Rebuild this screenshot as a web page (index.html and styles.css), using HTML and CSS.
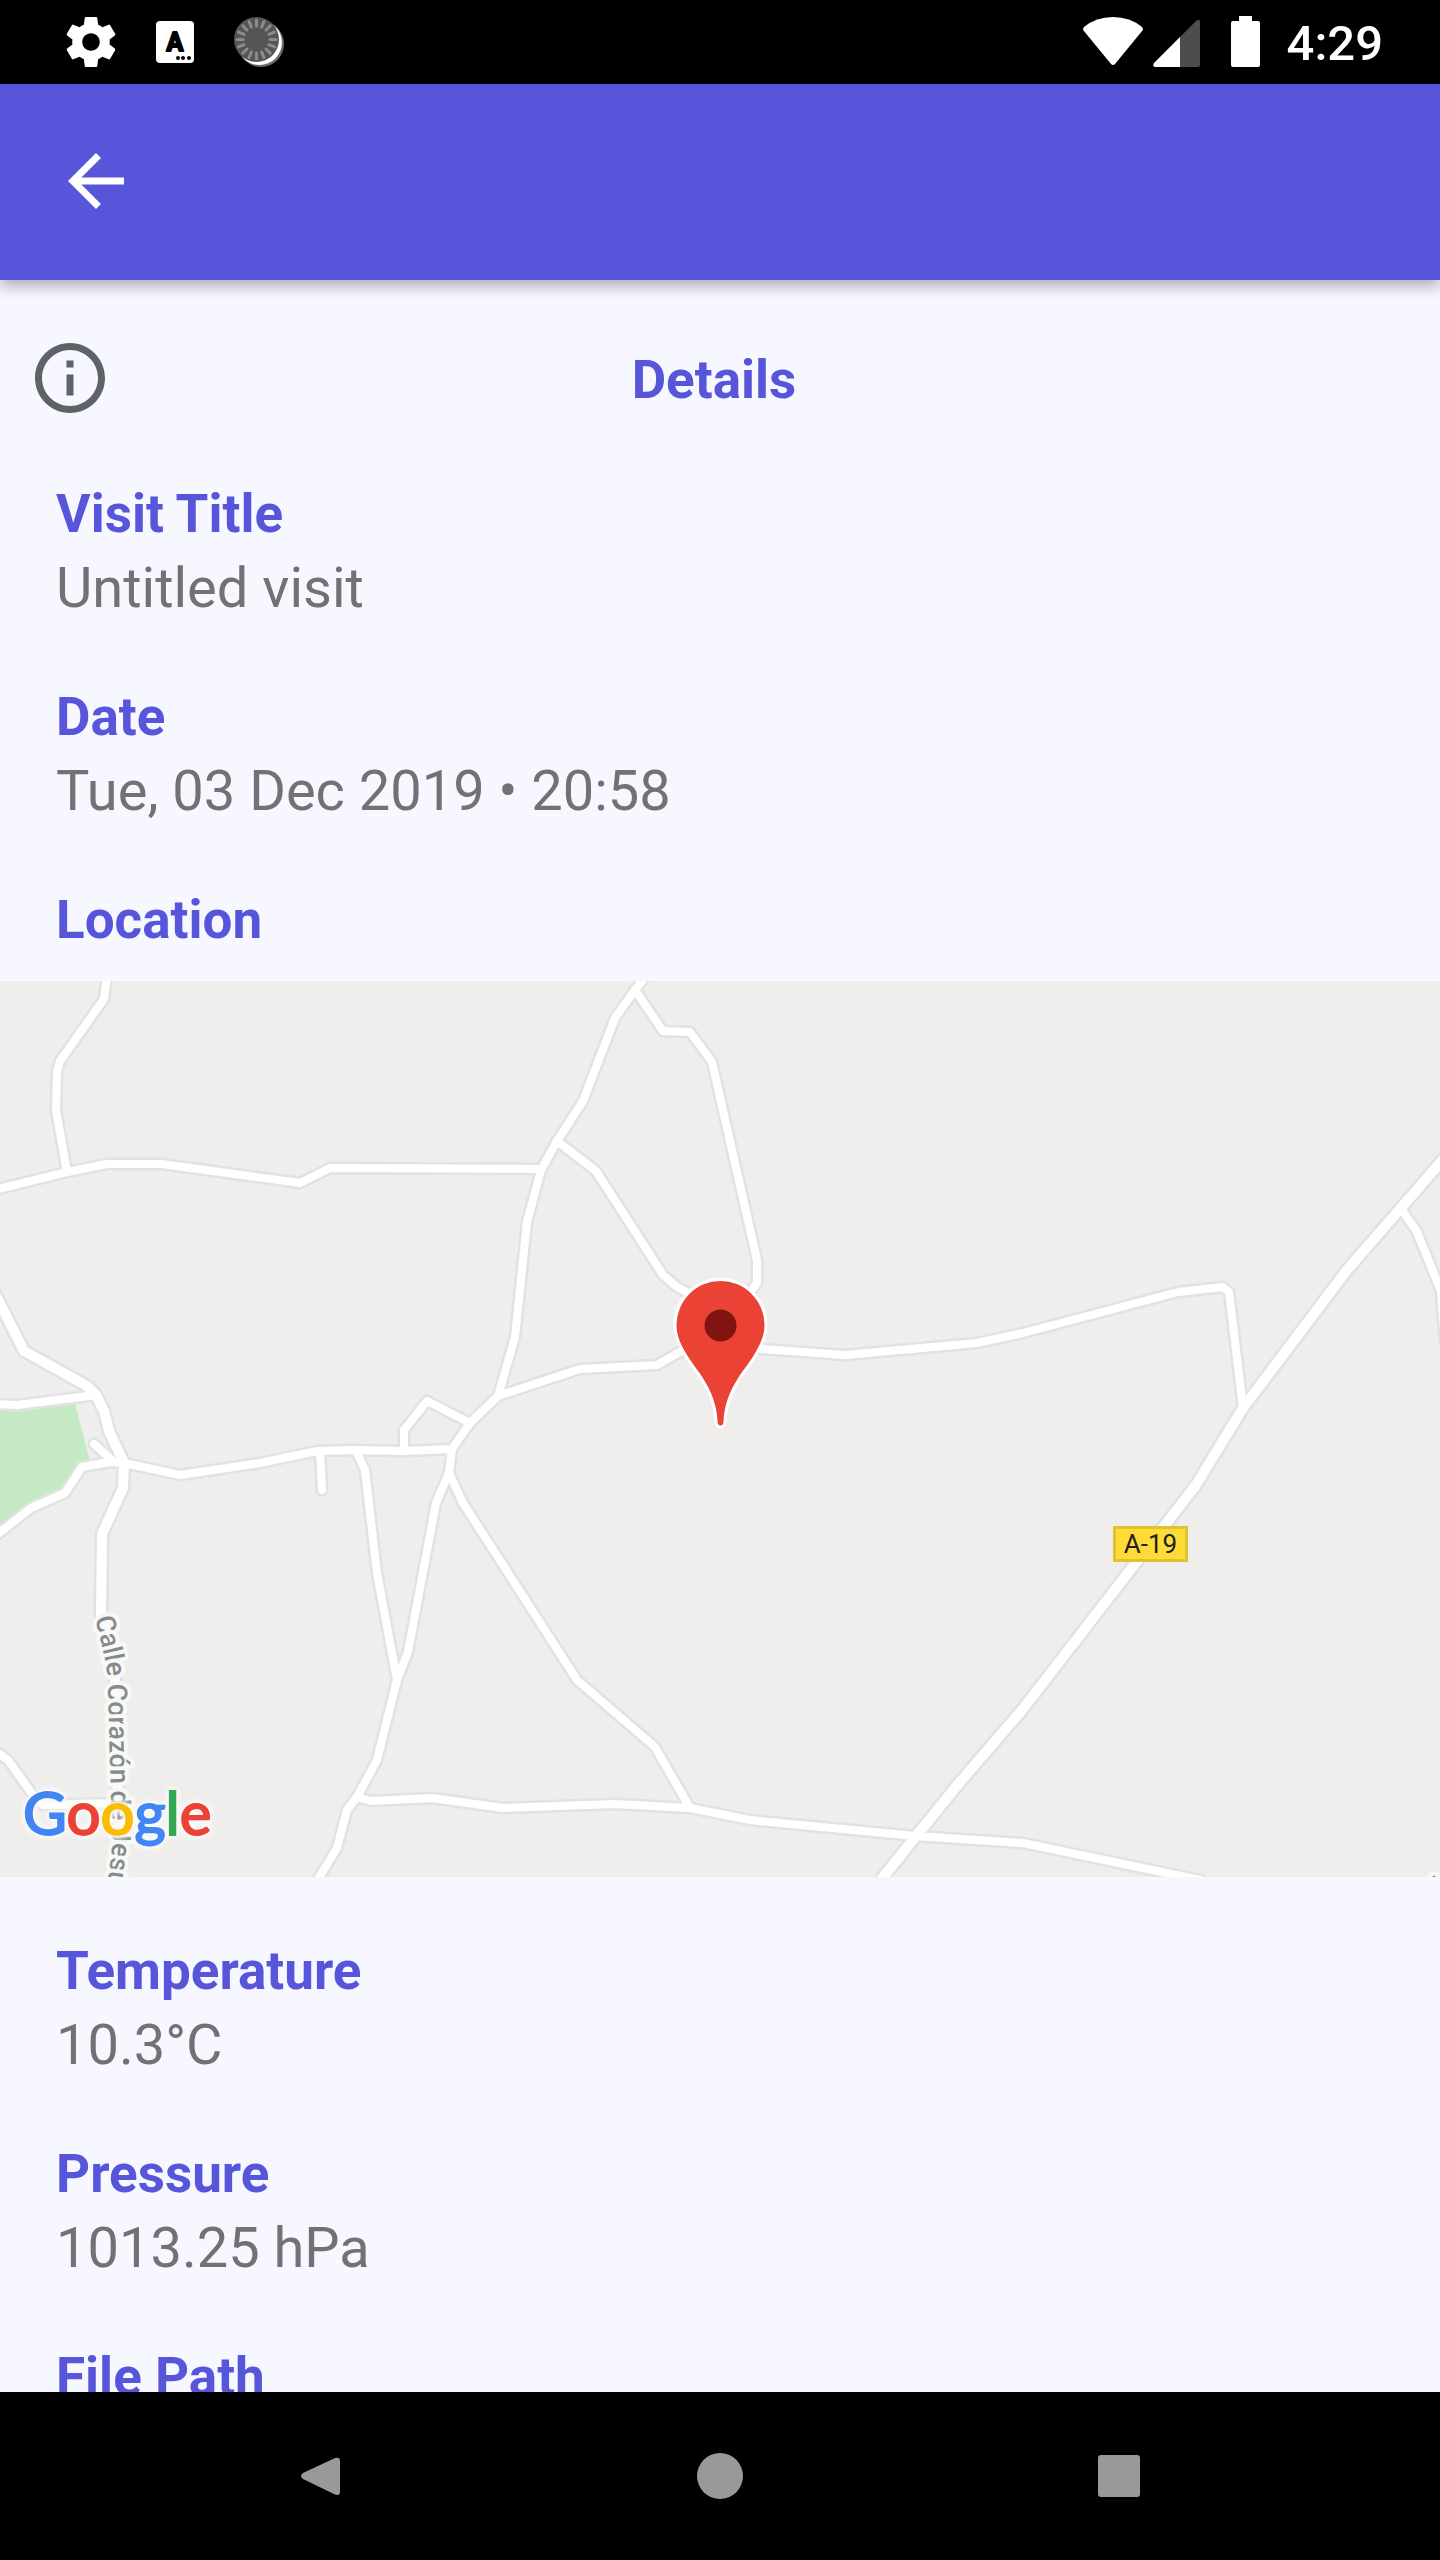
FILE: index.html
```html
<!DOCTYPE html>
<html lang="en">
<head>
<meta charset="utf-8">
<meta name="viewport" content="width=device-width, initial-scale=1">
<title>Visit details</title>
<link rel="stylesheet" href="styles.css">
</head>
<body class="screen">
<div class="status-bar">
  <div class="status-group status-left">
    <svg class="status-icon" viewBox="0 0 24 24" aria-hidden="true"><path fill="#fff" d="M19.43 12.98c.04-.32.07-.64.07-.98s-.03-.66-.07-.98l2.11-1.65c.19-.15.24-.42.12-.64l-2-3.46c-.12-.22-.39-.3-.61-.22l-2.49 1c-.52-.4-1.08-.73-1.69-.98l-.38-2.65C14.46 2.18 14.25 2 14 2h-4c-.25 0-.46.18-.49.42l-.38 2.65c-.61.25-1.17.59-1.69.98l-2.49-1c-.23-.09-.49 0-.61.22l-2 3.46c-.13.22-.07.49.12.64l2.11 1.65c-.04.32-.07.65-.07.98s.03.66.07.98l-2.11 1.65c-.19.15-.24.42-.12.64l2 3.46c.12.22.39.3.61.22l2.49-1c.52.4 1.08.73 1.69.98l.38 2.65c.03.24.24.42.49.42h4c.25 0 .46-.18.49-.42l.38-2.65c.61-.25 1.17-.59 1.69-.98l2.49 1c.23.09.49 0 .61-.22l2-3.46c.12-.22.07-.49-.12-.64l-2.11-1.65zM12 15.5c-1.93 0-3.5-1.57-3.5-3.5s1.57-3.5 3.5-3.5 3.5 1.57 3.5 3.5-1.57 3.5-3.5 3.5z"/></svg>
    <svg class="status-icon" viewBox="0 0 60 60" aria-hidden="true">
      <rect x="11" y="9" width="38" height="42" rx="4" fill="#fff"/>
      <text class="badge-letter" x="30" y="39" text-anchor="middle">A</text>
      <circle cx="33" cy="46" r="2"/><circle cx="38" cy="46" r="2"/><circle cx="44" cy="46" r="2"/>
    </svg>
    <svg class="status-icon" viewBox="0 0 60 60" aria-hidden="true">
      <circle cx="32" cy="32" r="23" fill="#6b6b6b"/>
      <circle cx="30.5" cy="30.5" r="22.5" fill="#fff"/>
      <circle cx="27.5" cy="27.5" r="22.5" fill="#555"/>
      <g stroke="#8c8c8c" stroke-width="3" stroke-linecap="round">
        <path id="tick" d="M27.500 14v-6"/>
        <use href="#tick" transform="rotate(22.5 27.5 27.5)"/><use href="#tick" transform="rotate(45 27.5 27.5)"/><use href="#tick" transform="rotate(67.5 27.5 27.5)"/><use href="#tick" transform="rotate(90 27.5 27.5)"/><use href="#tick" transform="rotate(112.5 27.5 27.5)"/><use href="#tick" transform="rotate(135 27.5 27.5)"/><use href="#tick" transform="rotate(157.5 27.5 27.5)"/><use href="#tick" transform="rotate(180 27.5 27.5)"/><use href="#tick" transform="rotate(202.5 27.5 27.5)"/><use href="#tick" transform="rotate(225 27.5 27.5)"/><use href="#tick" transform="rotate(247.5 27.5 27.5)"/><use href="#tick" transform="rotate(270 27.5 27.5)"/><use href="#tick" transform="rotate(292.5 27.5 27.5)"/><use href="#tick" transform="rotate(315 27.5 27.5)"/><use href="#tick" transform="rotate(337.5 27.5 27.5)"/>
      </g>
    </svg>
  </div>
  <div class="status-group status-right">
    <svg class="wifi" viewBox="0 0 60 60" aria-hidden="true"><path fill="#fff" d="M1 15Q13 5 30 5t29 10q1.500 2 .5 3.500L32 52q-2 2-4 0L.5 18.500Q-.5 17 1 15z"/></svg>
    <svg class="signal" viewBox="0 0 48 60" aria-hidden="true">
      <path fill="#4d4d4d" d="M28 55V25L44 9q4-3 4 1v43q0 2-2 2z"/>
      <path fill="#fff" d="M28 25v30H3q-3-1-1-4z"/>
    </svg>
    <svg class="battery" viewBox="0 0 30 60" aria-hidden="true"><path fill="#fff" d="M8 4h13v5h6q2 0 2 2v42q0 2-2 2H2q-2 0-2-2V11q0-2 2-2h6z"/></svg>
    <span class="clock">4:29</span>
  </div>
</div>

<header class="app-bar">
  <button class="back" type="button" aria-label="Back">
    <svg viewBox="0 0 24 24" aria-hidden="true"><path fill="#fff" d="M20 11H7.830l5.590-5.590L12 4l-8 8 8 8 1.410-1.410L7.830 13H20z"/></svg>
  </button>
</header>

<main class="content">
  <div class="section-head">
    <svg class="info" viewBox="0 0 24 24" aria-hidden="true"><path fill="#5f6266" d="M11 7h2v2h-2zm0 4h2v6h-2zm1-9C6.480 2 2 6.480 2 12s4.480 10 10 10 10-4.480 10-10S17.520 2 12 2zm0 18c-4.410 0-8-3.590-8-8s3.590-8 8-8 8 3.590 8 8-3.590 8-8 8z"/></svg>
    <h1 class="section-title">Details</h1>
  </div>

  <section class="fields">
    <div class="field"><h2 class="label">Visit Title</h2><p class="value">Untitled visit</p></div>
    <div class="field"><h2 class="label">Date</h2><p class="value">Tue, 03 Dec 2019 • 20:58</p></div>
    <div class="field"><h2 class="label">Location</h2></div>
  </section>

  <svg class="map" viewBox="0 0 1440 896" preserveAspectRatio="xMidYMid slice" role="img" aria-label="Map of the visit location">
    <defs>
      <g id="lanes">
        <path d="M107-4L104 18 60 80 57 91 56 129 67 191"/>
        <path d="M-6 209L67 191 107 183H162L300 202 330 187 541 188"/>
        <path d="M-6 423L17 424 96 414"/>
        <path d="M-6 556L31 527 65 512 82 486 110 481 124 482 180 494 260 482 317 470 353 469 404 470 452 468 470 442 498 415 580 388 657 384 687 367 720 350 762 368 845 374 977 362 1023 352 1178 311 1223 306 1229 311 1243 427"/>
        <path d="M94 463L113 480"/>
        <path d="M320 470L322 509"/>
        <path d="M356 470L365 489 377 592 397 699"/>
        <path d="M452 468L449 492 436 522 408 671 397 699 377 779 357 816 347 829 337 867 317 900"/>
        <path d="M357 816L371 820 432 817 503 827 615 823 690 827 750 839 915 855 1023 862 1200 899"/>
        <path d="M449 492L463 522 577 699 655 766 690 827"/>
        <path d="M404 470V449L427 420 470 442"/>
        <path d="M645-4L635 9 615 37 583 120 557 160 541 189 527 241 515 356 498 415"/>
        <path d="M635 9L663 50 690 51 712 81 757 279V302L740 325"/>
        <path d="M557 160L596 190 663 294 677 306 697 316"/>
        <path d="M1402 229L1417 251 1441 310 1445 360"/>
        <path d="M-6 769L8 779 35 817 43 824 117 822"/>
      </g>
      <g id="streets">
        <path d="M-10 303L24 370 87 405 96 414 104 430 109 450 124 482 123 507 102 553 101 634 115 699 117 792 120 856 113 900"/>
        <path d="M1448 173L1347 289 1243 427 1196 504 1022 729 960 801 917 854 880 900"/>
      </g>
      <path id="calle" d="M95 637L104 674Q108 690 108 712L111 820 112 868 106 915"/>
    </defs>
    <rect width="1440" height="896" fill="#efeeec"/>
    <path fill="#c5e8c5" d="M-2 427L75 423 90 480 82 486 65 512 31 527-2 550z"/>
    <g class="road casing"><use href="#lanes" stroke-width="13"/><use href="#streets" stroke-width="15"/></g>
    <g class="road surface"><use href="#lanes" stroke-width="8"/><use href="#streets" stroke-width="10"/></g>

    <text class="street-name"><textPath href="#calle">Calle Corazón de Jesús</textPath></text>

    <rect x="1114.500" y="546.500" width="72" height="33" fill="#ffdc35" stroke="#e0c22f" stroke-width="3"/>
    <text class="road-number" x="1150.500" y="572" text-anchor="middle">A-19</text>

    <circle cx="1434" cy="897" r="7" fill="#f7f7f6"/><circle cx="1434" cy="896" r="1.500" fill="#888"/>

    <path fill="#ea4335" stroke="#fff" stroke-width="6" paint-order="stroke" stroke-linejoin="round" d="M720.500 300a44 44 0 0 1 44 44C764.500 355 760 364 754 374C748 384 742 390 737 399C730 410 724 424 723.500 441Q723 444.500 720.500 444.500T717.500 441C717 424 711 410 704 399C699 390 693 384 687 374C681 364 676.500 355 676.500 344A44 44 0 0 1 720.500 300z"/>
    <circle cx="720.500" cy="344.500" r="16" fill="#811411"/>

    <text class="map-brand" x="23" y="854"><tspan class="brand-blue">G</tspan><tspan class="brand-red">o</tspan><tspan class="brand-yellow">o</tspan><tspan class="brand-blue">g</tspan><tspan class="brand-green">l</tspan><tspan class="brand-red">e</tspan></text>
  </svg>

  <section class="fields fields-after">
    <div class="field"><h2 class="label">Temperature</h2><p class="value">10.3°C</p></div>
    <div class="field"><h2 class="label">Pressure</h2><p class="value">1013.25 hPa</p></div>
    <div class="field"><h2 class="label">File Path</h2></div>
  </section>
</main>

<nav class="nav-bar" aria-label="System">
  <button class="nav-button" type="button" aria-label="Back"><svg viewBox="0 0 48 48" aria-hidden="true"><path fill="#999" d="M6 21L38 6q5-1.500 5 3v31q0 4-5 2.500L6 27q-4-3 0-6z"/></svg></button>
  <button class="nav-button" type="button" aria-label="Home"><svg viewBox="0 0 48 48" aria-hidden="true"><circle cx="24" cy="24" r="23" fill="#999"/></svg></button>
  <button class="nav-button" type="button" aria-label="Overview"><svg viewBox="0 0 48 48" aria-hidden="true"><rect x="3" y="3" width="42" height="42" rx="3" fill="#999"/></svg></button>
</nav>
</body>
</html>
```
FILE: styles.css
```css
*,
*::before,
*::after {
  box-sizing: border-box;
}

.screen {
  margin: 0;
  height: 100vh;
  display: flex;
  flex-direction: column;
  overflow: hidden;
  background: #f7f8ff;
  font-family: Roboto, "Liberation Sans", sans-serif;
}

svg {
  display: block;
}

button {
  display: flex;
  align-items: center;
  justify-content: center;
  padding: 0;
  border: 0;
  background: none;
}

/* Status bar */
.status-bar {
  flex: none;
  height: 84px;
  padding: 0 57px 0 61px;
  display: flex;
  align-items: center;
  justify-content: space-between;
  background: #000;
}

.status-group {
  display: flex;
  align-items: center;
}

.status-left {
  gap: 24px;
}

.status-icon,
.wifi {
  width: 60px;
  height: 60px;
}

.signal {
  width: 48px;
  height: 60px;
  margin-left: 9px;
}

.battery {
  width: 30px;
  height: 60px;
  margin-left: 31px;
}

.clock {
  margin-left: 26px;
  padding-top: 4px;
  color: #fff;
  font-size: 49px;
  line-height: 60px;
  font-weight: 500;
}

.badge-letter {
  font-size: 25px;
  font-weight: 700;
  stroke: #000;
  stroke-width: 2px;
  stroke-linejoin: round;
}

/* App bar */
.app-bar {
  flex: none;
  height: 196px;
  padding: 0 54px 3px;
  display: flex;
  align-items: center;
  position: relative;
  background: #5755d9;
  box-shadow: 0 6px 14px rgba(0, 0, 0, 0.3);
}

.back,
.back svg,
.info {
  width: 84px;
  height: 84px;
}

/* Content */
.content {
  flex: 1;
  min-height: 0;
  overflow-y: auto;
  scrollbar-width: none;
}

.section-head {
  display: grid;
  grid-template-columns: 84px 1fr 84px;
  align-items: center;
  padding: 56px 40px 0 28px;
}

.section-title,
.label {
  margin: 0;
  color: #5755d9;
  font-size: 53px;
  line-height: 62px;
  font-weight: 700;
}

.section-title {
  padding-top: 4px;
  text-align: center;
}

.fields {
  display: flex;
  flex-direction: column;
  gap: 65px;
  padding: 63px 56px 30px;
}

.field {
  display: flex;
  flex-direction: column;
  gap: 10px;
}

.value {
  margin: 0;
  color: #727276;
  font-size: 56px;
  line-height: 66px;
}

/* Map */
.map {
  width: 100%;
  height: 896px;
}

.road {
  fill: none;
  stroke-linecap: round;
  stroke-linejoin: round;
}

.casing {
  stroke: #e2e2e2;
}

.surface {
  stroke: #fff;
}

.street-name {
  font-size: 27px;
  font-weight: 500;
  fill: #868b8b;
  stroke: #f8f8f7;
  stroke-width: 8px;
  stroke-linejoin: round;
  paint-order: stroke;
}

.road-number {
  font-size: 26px;
  fill: #202124;
}

.map-brand {
  font-family: Lato, sans-serif;
  font-size: 60px;
  stroke-width: 2px;
  filter: drop-shadow(0 0 2px #faf9f8) drop-shadow(0 0 2px #faf9f8) drop-shadow(0 0 2px #faf9f8);
}

.brand-blue {
  fill: #4285f4;
  stroke: #4285f4;
}

.brand-red {
  fill: #ea4335;
  stroke: #ea4335;
}

.brand-yellow {
  fill: #fbbc05;
  stroke: #fbbc05;
}

.brand-green {
  fill: #34a853;
  stroke: #34a853;
}

/* Navigation bar */
.nav-bar {
  flex: none;
  height: 168px;
  padding: 0 121px;
  display: grid;
  grid-template-columns: repeat(3, 1fr);
  background: #000;
}

.nav-button svg {
  width: 48px;
  height: 48px;
}
```
